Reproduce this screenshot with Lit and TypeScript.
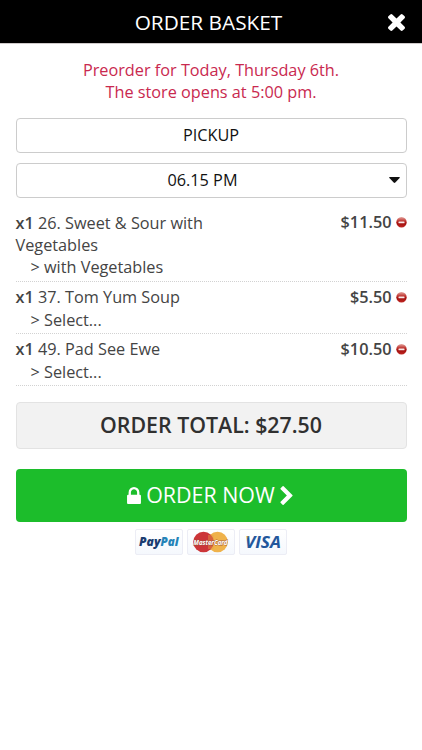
import { LitElement, html, css, svg } from "lit";
import { customElement } from "lit/decorators.js";

interface Item {
  name: string;
  option: string;
  price: string;
}

const items: Item[] = [
  { name: "26. Sweet & Sour with Vegetables", option: "with Vegetables", price: "$11.50" },
  { name: "37. Tom Yum Soup", option: "Select...", price: "$5.50" },
  { name: "49. Pad See Ewe", option: "Select...", price: "$10.50" },
];

@customElement("remove-icon")
class RemoveIcon extends LitElement {
  static styles = css`
    :host { display: block; width: 11px; height: 11px; }
    svg { display: block; }
  `;
  render() {
    return html`<svg width="11" height="11" viewBox="0 0 11 11">
      <defs>
        <linearGradient id="g" x1="0" y1="0" x2="0" y2="1">
          <stop offset="0" stop-color="#e3a29c" />
          <stop offset=".4" stop-color="#bd2f2b" />
          <stop offset=".6" stop-color="#a3100f" />
          <stop offset="1" stop-color="#c02722" />
        </linearGradient>
      </defs>
      <circle cx="5.5" cy="5.3" r="5.2" fill="url(#g)" />
      <rect x="2.5" y="4.6" width="6" height="1.7" rx=".4" fill="#f8e9e8" />
    </svg>`;
  }
}

@customElement("payment-cards")
class PaymentCards extends LitElement {
  static styles = css`
    :host { display: flex; justify-content: center; gap: 4px; }
    .card {
      box-sizing: border-box;
      width: 48px;
      height: 26px;
      border: 1px solid #ecedf5;
      border-radius: 2px;
      background: linear-gradient(#fff, #f5f8fd);
    }
    svg { display: block; overflow: visible; }
    text { font-family: "Open Sans", sans-serif; font-style: italic; font-weight: 800; }
    .visa { font-weight: 700; }
    .master { font-weight: 700; }
  `;
  render() {
    return html`
      <div class="card">
        <svg width="46" height="24" viewBox="0 0 46 24">
          <text x="3" y="16" font-size="11.5" textLength="21.5" lengthAdjust="spacingAndGlyphs" fill="#1b3c70">Pay</text>
          <text x="24.5" y="16" font-size="11.5" textLength="18" lengthAdjust="spacingAndGlyphs" fill="#2583b8">Pal</text>
        </svg>
      </div>
      <div class="card">
        <svg width="46" height="24" viewBox="0 0 46 24">
          <circle cx="29.5" cy="12" r="10.3" fill="#efb24b" />
          <circle cx="15.5" cy="12" r="10.3" fill="#cc3538" />
          ${[6, 8, 10, 14, 16, 18].map(
            (y) => svg`<path d=${`M20 ${y}h5.5`} stroke="#e59a45" stroke-width=".9" />`,
          )}
          <text class="master" x="5.5" y="15" font-size="7.8" textLength="34" lengthAdjust="spacingAndGlyphs" fill="#fff" stroke="#a05038" stroke-width=".8" paint-order="stroke">MasterCard</text>
        </svg>
      </div>
      <div class="card">
        <svg width="46" height="24" viewBox="0 0 46 24">
          <defs>
            <linearGradient id="v" x1="0" x2="1" y1="0" y2=".35">
              <stop offset=".12" stop-color="#e9a63b" />
              <stop offset=".2" stop-color="#23569b" />
            </linearGradient>
          </defs>
          <text class="visa" x="5" y="18" font-size="16.5" textLength="36" lengthAdjust="spacingAndGlyphs" fill="url(#v)">VISA</text>
        </svg>
      </div>
    `;
  }
}

@customElement("app-root")
class AppRoot extends LitElement {
  static styles = css`
    :host {
      display: block;
      min-height: 750px;
      background: #fff;
      color: #444;
      font: 16.25px/22.4px "Open Sans", sans-serif;
    }
    .header {
      display: grid;
      grid-template-columns: 40px 1fr 40px;
      align-items: center;
      height: 43px;
      background: #000;
      color: #fff;
      font-size: 20.8px;
      font-weight: 500;
      text-align: center;
      border-bottom: 1px solid #cfcaca;
    }
    .title { grid-column: 2; padding: 1px 5px 0 0; white-space: nowrap; }
    .close { justify-self: center; margin: 1px 11px 0 0; }
    svg { display: block; fill: currentColor; }
    .body { padding: 14.5px 15.5px 0; }
    .notice { text-align: center; color: #c9294f; }
    .field {
      box-sizing: border-box;
      display: flex;
      align-items: center;
      justify-content: center;
      height: 34.5px;
      border: 1px solid #ccc;
      border-radius: 4px;
      color: #111;
      margin-top: 10.3px;
    }
    .field.pickup { margin-top: 15.1px; }
    .time { flex: 1; text-align: center; }
    .select { padding: 0 6px 0 0; }
    .items { margin-top: 9.6px; }
    .item {
      display: flex;
      justify-content: space-between;
      padding: 4.3px 0 2px;
      border-bottom: 1px dotted #d2d2d2;
    }
    .desc { width: 210px; }
    .option { padding-left: 15px; }
    b { font-weight: 600; }
    .price { display: flex; gap: 4px; align-items: center; height: 22px; font-weight: 600; }
    .total {
      box-sizing: border-box;
      display: flex;
      align-items: center;
      justify-content: center;
      height: 47px;
      margin-top: 15.5px;
      border: 1px solid #e3e3e3;
      border-radius: 4px;
      background: #f2f2f2;
      color: #303030;
      font-size: 21.35px;
      font-weight: 600;
    }
    .order {
      box-sizing: border-box;
      display: flex;
      align-items: center;
      justify-content: center;
      gap: 5.5px;
      height: 53px;
      padding-right: 2px;
      margin: 20px 0 7px;
      border-radius: 4px;
      background: #1cbd2b;
      color: #fff;
      font-size: 21.4px;
    }
  `;

  render() {
    return html`
      <div class="header">
        <div class="title">ORDER BASKET</div>
        <svg class="close" width="17" height="17" viewBox="110 366 1188 1188">
          <path d="M1298 1322q0 40-28 68l-136 136q-28 28-68 28t-68-28l-294-294-294 294q-28 28-68 28t-68-28l-136-136q-28-28-28-68t28-68l294-294-294-294q-28-28-28-68t28-68l136-136q28-28 68-28t68 28l294 294 294-294q28-28 68-28t68 28l136 136q28 28 28 68t-28 68l-294 294 294 294q28 28 28 68z" />
        </svg>
      </div>
      <div class="body">
        <div class="notice">Preorder for Today, Thursday 6th.<br />The store opens at 5:00 pm.</div>
        <div class="field pickup">PICKUP</div>
        <div class="field select">
          <span class="time">06.15 PM</span>
          <svg width="11" height="6" viewBox="0 0 11 6"><path d="M.9 0h9.2q1.2 0 .5.9L6.3 5.6q-.8.8-1.6 0L.4.9Q-.3 0 .9 0z" /></svg>
        </div>
        <div class="items">
          ${items.map(
            (i) => html`<div class="item">
              <div class="desc">
                <b>x1</b> ${i.name}
                <div class="option">&gt; ${i.option}</div>
              </div>
              <div class="price">${i.price}<remove-icon></remove-icon></div>
            </div>`,
          )}
        </div>
        <div class="total">ORDER TOTAL: $27.50</div>
        <div class="order">
          <svg width="14" height="17" viewBox="0 128 1152 1408">
            <path d="M320 768h512v-192q0-106-75-181t-181-75-181 75-75 181v192zm832 96v576q0 40-28 68t-68 28h-960q-40 0-68-28t-28-68v-576q0-40 28-68t68-28h32v-192q0-184 132-316t316-132 316 132 132 316v192h32q40 0 68 28t28 68z" />
          </svg>
          <span>ORDER NOW</span>
          <svg width="13" height="19" viewBox="90 128 1036 1612">
            <path d="M1107 979l-742 742q-19 19-45 19t-45-19l-166-166q-19-19-19-45t19-45l531-531-531-531q-19-19-19-45t19-45l166-166q19-19 45-19t45 19l742 742q19 19 19 45t-19 45z" />
          </svg>
        </div>
        <payment-cards></payment-cards>
      </div>
    `;
  }
}
